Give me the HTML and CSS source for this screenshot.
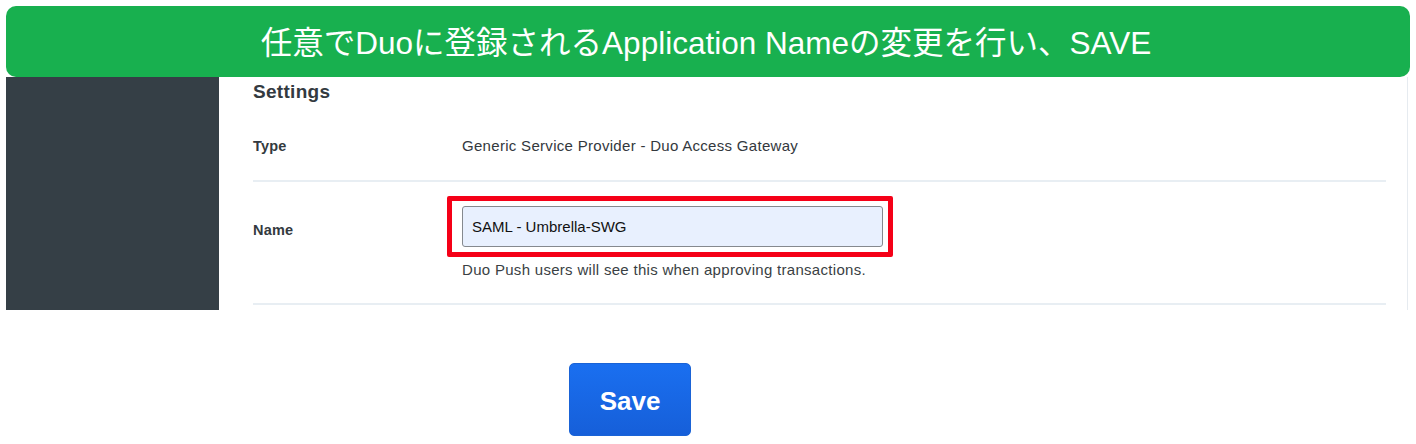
FILE: index.html
```html
<!DOCTYPE html>
<html lang="ja">
<head>
<meta charset="utf-8">
<link rel="stylesheet" href="styles.css">
</head>
<body>
<div class="page">
  <div class="banner">任意でDuoに登録されるApplication Nameの変更を行い、SAVE</div>
  <div class="main">
    <aside class="sidebar"></aside>
    <section class="content">
      <h2 class="title">Settings</h2>
      <div class="row row-type">
        <div class="label">Type</div>
        <div class="value">Generic Service Provider - Duo Access Gateway</div>
      </div>
      <div class="row row-name">
        <div class="label">Name</div>
        <div class="value">
          <div class="field">
            <input class="input" type="text" value="SAML - Umbrella-SWG">
            <div class="highlight"></div>
          </div>
          <div class="help">Duo Push users will see this when approving transactions.</div>
        </div>
      </div>
    </section>
  </div>
  <div class="actions">
    <button class="save">Save</button>
  </div>
</div>
</body>
</html>
```

FILE: styles.css
```css
* { box-sizing: border-box; }
html, body { margin: 0; padding: 0; background: #ffffff; }
body { font-family: "Liberation Sans", Arial, sans-serif; color: #333a40; }
.page { padding: 6px 6px 0 6px; }

.banner {
  height: 71px;
  background: #18b04f;
  border-radius: 10px;
  color: #ffffff;
  font-family: "Liberation Sans", "Noto Sans CJK JP", sans-serif;
  font-size: 31.5px;
  font-weight: 400;
  display: flex;
  align-items: center;
  justify-content: center;
  padding-bottom: 3px;
  padding-right: 4px;
}

.main { display: flex; height: 233px; }
.sidebar { width: 213px; background: #353f46; flex: none; }
.content {
  flex: 1;
  margin-left: 1px;
  border-right: 1px solid #e6ebf0;
  margin-right: 2px;
  padding: 0 21px 0 33px;
}
.title {
  margin: 0;
  font-size: 19px;
  font-weight: 700;
  letter-spacing: 0.3px;
  color: #333a40;
  line-height: 22px;
  padding-top: 4px;
  height: 40px;
}
.row { display: flex; border-bottom: 2px solid #e8eef3; }
.row-type { height: 65px; align-items: flex-start; padding-top: 20px; }
.row-name { height: 123px; padding-top: 24px; }
.row-name .label { padding-top: 15px; }
.label {
  width: 209px;
  flex: none;
  font-size: 14.5px;
  font-weight: 700;
  letter-spacing: 0.2px;
  color: #333a40;
  line-height: 18px;
}
.value { font-size: 15px; letter-spacing: 0.3px; color: #33383d; line-height: 18px; }

.field { position: relative; width: 421px; }
.input {
  display: block;
  width: 421px;
  height: 41px;
  margin: 0;
  background: #e8f0fe;
  border: 1px solid #85898e;
  border-radius: 3px;
  padding: 0 9px;
  font-family: "Liberation Sans", Arial, sans-serif;
  font-size: 15px;
  color: #111111;
  outline: none;
}
.highlight {
  position: absolute;
  left: -15px;
  top: -10px;
  right: -10px;
  bottom: -10px;
  border: 5px solid #f50017;
  border-radius: 2px;
  pointer-events: none;
}
.help { margin-top: 14px; font-size: 15px; letter-spacing: 0.3px; color: #3a3f44; }

.actions { display: flex; padding-left: 563px; padding-top: 53px; }
.save {
  width: 122px;
  height: 73px;
  border: 1px solid #1a63d6;
  border-radius: 5px;
  background: linear-gradient(#1a6ff0, #165fd9);
  color: #ffffff;
  font-family: "Liberation Sans", Arial, sans-serif;
  font-size: 26px;
  font-weight: 700;
  padding: 4px 0 0 0;
}
```
